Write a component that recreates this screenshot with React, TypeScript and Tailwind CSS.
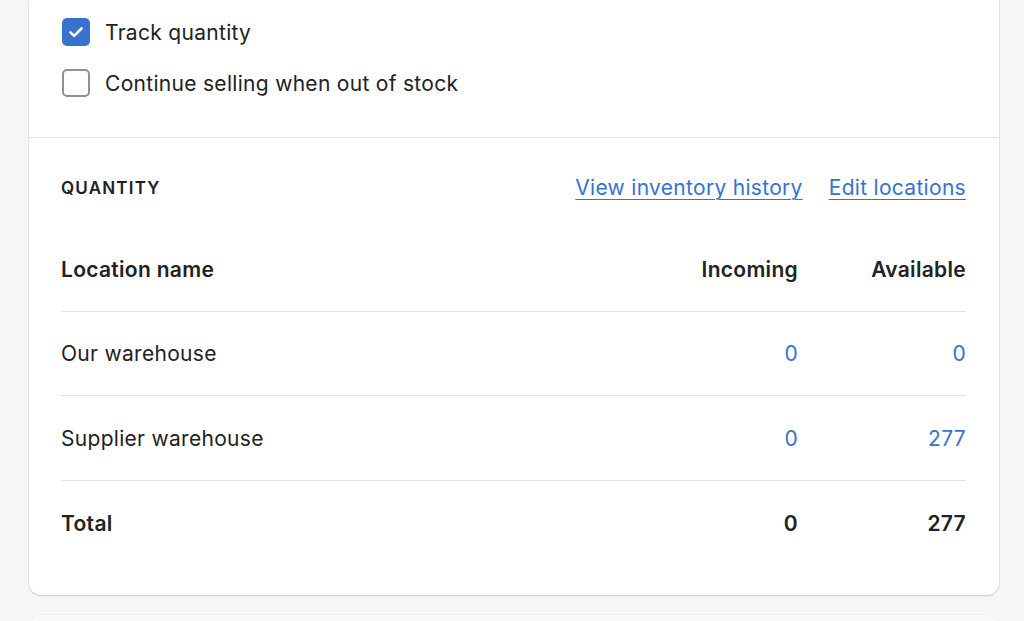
import React from "react";

const rows = [
  { name: "Our warehouse", incoming: "0", available: "0", h: "h-[84px]" },
  { name: "Supplier warehouse", incoming: "0", available: "277", h: "h-[85px]" },
];

const App = () => {
  return (
    <div
      className="h-screen bg-[#f6f6f7] pl-[29px] pr-[25px] text-[#202223] overflow-hidden tracking-[0.3px]"
      style={{ fontFamily: "Inter, 'Noto Sans', sans-serif" }}
    >
      <div className="bg-white rounded-b-[12px] shadow-[0_1px_2px_rgba(0,0,0,0.15),0_0_0_1px_rgba(63,63,68,0.04)]">
        {/* inventory options */}
        <div className="px-[32px] pt-[18px] pb-[40px] flex flex-col gap-[23px]">
          <label className="flex items-center gap-[15px] h-[28px]">
            <span className="ml-[1px] w-[28px] h-[28px] rounded-[5px] bg-[#3872cf] flex items-center justify-center">
              <svg width="20" height="20" viewBox="0 0 16 16" fill="none">
                <path d="M3.6 8.3l2.9 2.8L12.4 5.2" stroke="white" strokeWidth="2.1" strokeLinecap="round" strokeLinejoin="round" />
              </svg>
            </span>
            <span className="text-[21px] pt-[1px]">Track quantity</span>
          </label>
          <label className="flex items-center gap-[15px] h-[28px]">
            <span className="ml-[1px] w-[28px] h-[28px] rounded-[5px] border-[2.5px] border-[#8c9196] bg-white" />
            <span className="text-[21px] pt-[1px]">Continue selling when out of stock</span>
          </label>
        </div>

        <div className="border-t border-[#e1e3e5] pl-[32px] pr-[33px] pt-[37px] pb-[30px]">
          <div className="flex items-center justify-between h-[24px]">
            <h2 className="text-[17px] font-semibold tracking-[0.07em] pt-[3px]">QUANTITY</h2>
            <div className="flex gap-[26px] text-[21px] text-[#3872cf] pt-[1px]">
              <a className="underline underline-offset-[4px] decoration-[1px]">View inventory history</a>
              <a className="underline underline-offset-[4px] decoration-[1px]">Edit locations</a>
            </div>
          </div>

          <div className="mt-[28px] text-[21px]">
            <div className="flex items-center h-[84px] font-semibold pt-[1px]">
              <div className="flex-1">Location name</div>
              <div className="w-[200px] text-right">Incoming</div>
              <div className="w-[168px] text-right">Available</div>
            </div>
            {rows.map((r) => (
              <div key={r.name} className={`flex items-center ${r.h} border-t border-[#e1e3e5] pt-[1px]`}>
                <div className="flex-1">{r.name}</div>
                <div className="w-[200px] text-right text-[#3872cf]">{r.incoming}</div>
                <div className="w-[168px] text-right text-[#3872cf]">{r.available}</div>
              </div>
            ))}
            <div className="flex items-center h-[85px] border-t border-[#e1e3e5] font-semibold pt-[1px]">
              <div className="flex-1">Total</div>
              <div className="w-[200px] text-right">0</div>
              <div className="w-[168px] text-right">277</div>
            </div>
          </div>
        </div>
      </div>

      <div className="mt-[20px] h-[40px] bg-[#f9f9fa] rounded-t-[12px] shadow-[0_0_0_1px_rgba(63,63,68,0.03)]" />
    </div>
  );
};

export default App;
